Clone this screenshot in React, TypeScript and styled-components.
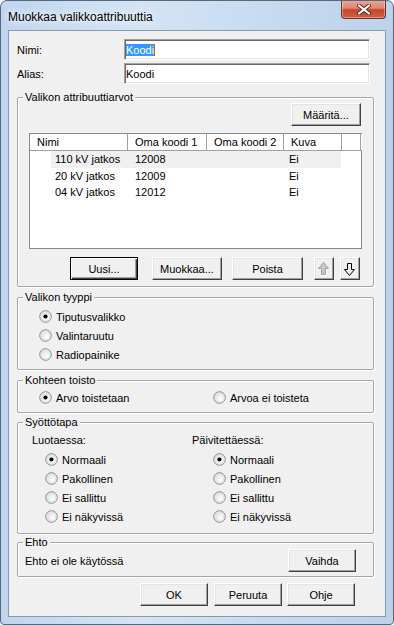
import React from "react";
import styled, { createGlobalStyle } from "styled-components";

const GlobalStyle = createGlobalStyle`
  html, body { margin: 0; padding: 0; background: #fff; }
  body {
    font-family: "Liberation Sans", Arial, sans-serif;
    font-size: 11px;
    color: #000;
  }
  * { box-sizing: border-box; }
`;

const rows = [
  { name: "110 kV jatkos", code1: "12008", code2: "", pic: "Ei", selected: true },
  { name: "20 kV jatkos", code1: "12009", code2: "", pic: "Ei", selected: false },
  { name: "04 kV jatkos", code1: "12012", code2: "", pic: "Ei", selected: false },
];

const inputModes = ["Normaali", "Pakollinen", "Ei sallittu", "Ei näkyvissä"];

const Window = styled.div`
  width: 394px;
  height: 625px;
  display: flex;
  flex-direction: column;
  border: 1px solid #55687c;
  border-radius: 7px 7px 4px 4px;
  background: linear-gradient(to right, #bfd5ee 0%, #d4e4f5 35%, #c8dbf0 65%, #bcd2eb 100%);
  overflow: hidden;
`;

const TitleBar = styled.div`
  height: 29px;
  display: flex;
  justify-content: space-between;
  align-items: flex-start;
  padding-left: 7px;
`;

const Title = styled.div`
  align-self: center;
  margin-top: 2px;
  font-family: "Liberation Sans", Arial, sans-serif;
  font-size: 12px;
  color: #000;
  text-shadow: 0 0 6px #fff, 0 0 10px #fff;
`;

const CloseButton = styled.div`
  width: 45px;
  height: 19px;
  margin-top: -1px;
  margin-right: 7px;
  display: flex;
  align-items: center;
  justify-content: center;
  border: 1px solid #6e3128;
  border-top: none;
  border-radius: 0 0 4px 4px;
  background: linear-gradient(to bottom, #e9a99a 0%, #dd8772 45%, #c8452b 55%, #d25f3f 100%);
  box-shadow: inset 0 0 0 1px rgba(255, 255, 255, 0.35);
`;

const Client = styled.div`
  flex: 1;
  margin: 0 7px 7px;
  display: flex;
  flex-direction: column;
  background: #f0f0f0;
  border: 1px solid #8799ad;
  padding: 8px 11px 0 8px;
`;

const FieldRow = styled.div`
  display: grid;
  grid-template-columns: 107px 246px;
  align-items: center;
  height: 21px;
  margin-bottom: 3px;
`;

const TextBox = styled.div`
  height: 21px;
  display: flex;
  align-items: center;
  padding-left: 1px;
  background: #fff;
  border: 1px solid;
  border-color: #a0a0a0 #fff #fff #a0a0a0;
  box-shadow: inset 1px 1px 0 #696969, inset -1px -1px 0 #e3e3e3;
`;

const Selected = styled.span`
  background: #3399ff;
  color: #fff;
  border-right: 1px solid #c06000;
`;

const Group = styled.fieldset<{ $mt: number }>`
  margin: ${(p) => p.$mt}px 0 0;
  padding: 0;
  min-width: 0;
  border: 1px solid #a6a6a6;
  border-radius: 2px;
  box-shadow: inset 1px 1px 0 #fff, 1px 1px 0 #fff;
`;

const Legend = styled.legend`
  margin-left: 5px;
  padding: 0 2px;
  height: 12px;
  line-height: 12px;
  background: #f0f0f0;
`;

const GroupBody = styled.div<{ $pad: string }>`
  display: flex;
  flex-direction: column;
  padding: ${(p) => p.$pad};
`;

const Button = styled.div<{ $w: number; $ml?: number; $default?: boolean }>`
  width: ${(p) => p.$w}px;
  height: 23px;
  margin-left: ${(p) => p.$ml ?? 0}px;
  flex: none;
  display: flex;
  align-items: center;
  justify-content: center;
  background: #f0f0f0;
  border: 1px solid;
  border-color: ${(p) => (p.$default ? "#000" : "#fff #404040 #404040 #fff")};
  box-shadow: ${(p) =>
    p.$default
      ? "inset 1px 1px 0 #fff, inset -1px -1px 0 #404040, inset -2px -2px 0 #a0a0a0"
      : "inset -1px -1px 0 #a0a0a0, inset 1px 1px 0 #e3e3e3"};
`;

const TopRight = styled.div`
  display: flex;
  justify-content: flex-end;
  padding-right: 1px;
`;

const ListView = styled.div`
  height: 116px;
  margin-top: 7px;
  background: #fff;
  border: 1px solid #828790;
`;

const HeaderRow = styled.div`
  display: flex;
  height: 17px;
  border-bottom: 1px solid #a0a0a0;
`;

const HeaderCell = styled.div<{ $w?: number }>`
  ${(p) => (p.$w ? `width: ${p.$w}px;` : "flex: 1;")}
  flex-shrink: 0;
  display: flex;
  align-items: center;
  padding-left: 7px;
  border-right: 1px solid #a0a0a0;
  box-shadow: 1px 0 0 #fff;
`;

const Row = styled.div`
  display: flex;
  height: 16.5px;
`;

const RowIndent = styled.div`
  width: 21px;
`;

const RowBody = styled.div<{ $selected: boolean }>`
  display: grid;
  grid-template-columns: 76px 79px 77px 58px;
  align-items: center;
  background: ${(p) => (p.$selected ? "#f0f0f0" : "transparent")};
`;

const Cell = styled.div<{ $pl: number }>`
  padding-left: ${(p) => p.$pl}px;
  white-space: nowrap;
`;

const ButtonRow = styled.div`
  display: flex;
  margin-top: 8px;
  padding-left: 41px;
`;

const RadioRow = styled.div<{ $indent: number }>`
  height: 19px;
  display: flex;
  align-items: center;
  gap: 4px;
  padding-left: ${(p) => p.$indent}px;
`;

const TwoCols = styled.div<{ $cols: string }>`
  display: grid;
  grid-template-columns: ${(p) => p.$cols};
`;

const SubHead = styled.div`
  height: 16px;
  display: flex;
  align-items: center;
  margin-bottom: 2px;
`;

const EhtoRow = styled.div`
  display: flex;
  align-items: center;
  justify-content: space-between;
`;

const Footer = styled.div`
  display: flex;
  justify-content: flex-end;
  margin-top: 6px;
  padding-right: 19px;
`;

const Radio = ({ checked }: { checked?: boolean }) => (
  <svg width="13" height="13" viewBox="0 0 13 13" style={{ flex: "none" }}>
    <defs>
      <radialGradient id="rg" cx="0.65" cy="0.65" r="0.7">
        <stop offset="0" stopColor="#ffffff" />
        <stop offset="1" stopColor="#dcdcdc" />
      </radialGradient>
    </defs>
    <circle cx="6.5" cy="6.5" r="5.8" fill="url(#rg)" stroke="#8d8d8d" strokeWidth="1" />
    <circle cx="6.5" cy="6.5" r="4.3" fill="none" stroke="#e4e4e4" strokeWidth="1" />
    {checked && <circle cx="6.5" cy="6.5" r="2.1" fill="#000" />}
  </svg>
);

const RadioItem = ({ label, checked, indent }: { label: string; checked?: boolean; indent: number }) => (
  <RadioRow $indent={indent}>
    <Radio checked={checked} />
    <span>{label}</span>
  </RadioRow>
);

const Arrow = ({ up, disabled }: { up?: boolean; disabled?: boolean }) => {
  const d = "M3.5 12.5 H7.5 V6.5 H10.5 L5.5 0.5 L0.5 6.5 H3.5 Z";
  return (
    <svg width="12" height="14" viewBox="0 0 12 14" style={{ transform: up ? "none" : "scaleY(-1)" }}>
      {disabled && <path d={d} transform="translate(1 1)" fill="none" stroke="#fff" />}
      <path d={d} fill={disabled ? "#c8c8c8" : "none"} stroke={disabled ? "#a0a0a0" : "#000"} />
    </svg>
  );
};

const CloseGlyph = () => (
  <svg width="14" height="11" viewBox="0 0 14 11">
    <path
      d="M2 1.5 L12 9.5 M12 1.5 L2 9.5"
      stroke="#5a2a22"
      strokeWidth="4"
      strokeLinecap="round"
    />
    <path d="M2 1.5 L12 9.5 M12 1.5 L2 9.5" stroke="#fff" strokeWidth="2.2" strokeLinecap="round" />
  </svg>
);

const App = () => {
  return (
    <>
      <GlobalStyle />
      <Window>
        <TitleBar>
          <Title>Muokkaa valikkoattribuuttia</Title>
          <CloseButton>
            <CloseGlyph />
          </CloseButton>
        </TitleBar>
        <Client>
          <FieldRow>
            <span>Nimi:</span>
            <TextBox>
              <Selected>Koodi</Selected>
            </TextBox>
          </FieldRow>
          <FieldRow>
            <span>Alias:</span>
            <TextBox>Koodi</TextBox>
          </FieldRow>

          <Group $mt={4}>
            <Legend>Valikon attribuuttiarvot</Legend>
            <GroupBody $pad="0 11px 6px 11px">
              <TopRight>
                <Button $w={70}>Määritä...</Button>
              </TopRight>
              <ListView>
                <HeaderRow>
                  <HeaderCell $w={98}>Nimi</HeaderCell>
                  <HeaderCell $w={79}>Oma koodi 1</HeaderCell>
                  <HeaderCell $w={77}>Oma koodi 2</HeaderCell>
                  <HeaderCell $w={58}>Kuva</HeaderCell>
                  <HeaderCell />
                </HeaderRow>
                {rows.map((r) => (
                  <Row key={r.name}>
                    <RowIndent />
                    <RowBody $selected={r.selected}>
                      <Cell $pl={4}>{r.name}</Cell>
                      <Cell $pl={8}>{r.code1}</Cell>
                      <Cell $pl={8}>{r.code2}</Cell>
                      <Cell $pl={6}>{r.pic}</Cell>
                    </RowBody>
                  </Row>
                ))}
              </ListView>
              <ButtonRow>
                <Button $w={68} $default>Uusi...</Button>
                <Button $w={70} $ml={14}>Muokkaa...</Button>
                <Button $w={71} $ml={10}>Poista</Button>
                <Button $w={20} $ml={11}>
                  <Arrow up disabled />
                </Button>
                <Button $w={20} $ml={6}>
                  <Arrow />
                </Button>
              </ButtonRow>
            </GroupBody>
          </Group>

          <Group $mt={4}>
            <Legend>Valikon tyyppi</Legend>
            <GroupBody $pad="4px 0 5px 0">
              <RadioItem indent={21} label="Tiputusvalikko" checked />
              <RadioItem indent={21} label="Valintaruutu" />
              <RadioItem indent={21} label="Radiopainike" />
            </GroupBody>
          </Group>

          <Group $mt={4}>
            <Legend>Kohteen toisto</Legend>
            <GroupBody $pad="2px 0 5px 0">
              <TwoCols $cols="195px 1fr">
                <RadioItem indent={21} label="Arvo toistetaan" checked />
                <RadioItem indent={0} label="Arvoa ei toisteta" />
              </TwoCols>
            </GroupBody>
          </Group>

          <Group $mt={3}>
            <Legend>Syöttötapa</Legend>
            <GroupBody $pad="4px 0 7px 14px">
              <TwoCols $cols="160px 1fr">
                <div>
                  <SubHead>Luotaessa:</SubHead>
                  {inputModes.map((m, i) => (
                    <RadioItem key={m} indent={13} label={m} checked={i === 0} />
                  ))}
                </div>
                <div>
                  <SubHead>Päivitettäessä:</SubHead>
                  {inputModes.map((m, i) => (
                    <RadioItem key={m} indent={21} label={m} checked={i === 0} />
                  ))}
                </div>
              </TwoCols>
            </GroupBody>
          </Group>

          <Group $mt={2}>
            <Legend>Ehto</Legend>
            <GroupBody $pad="1px 17px 4px 7px">
              <EhtoRow>
                <span>Ehto ei ole käytössä</span>
                <Button $w={68}>Vaihda</Button>
              </EhtoRow>
            </GroupBody>
          </Group>

          <Footer>
            <Button $w={68}>OK</Button>
            <Button $w={68} $ml={6}>Peruuta</Button>
            <Button $w={68} $ml={5}>Ohje</Button>
          </Footer>
        </Client>
      </Window>
    </>
  );
};

export default App;
